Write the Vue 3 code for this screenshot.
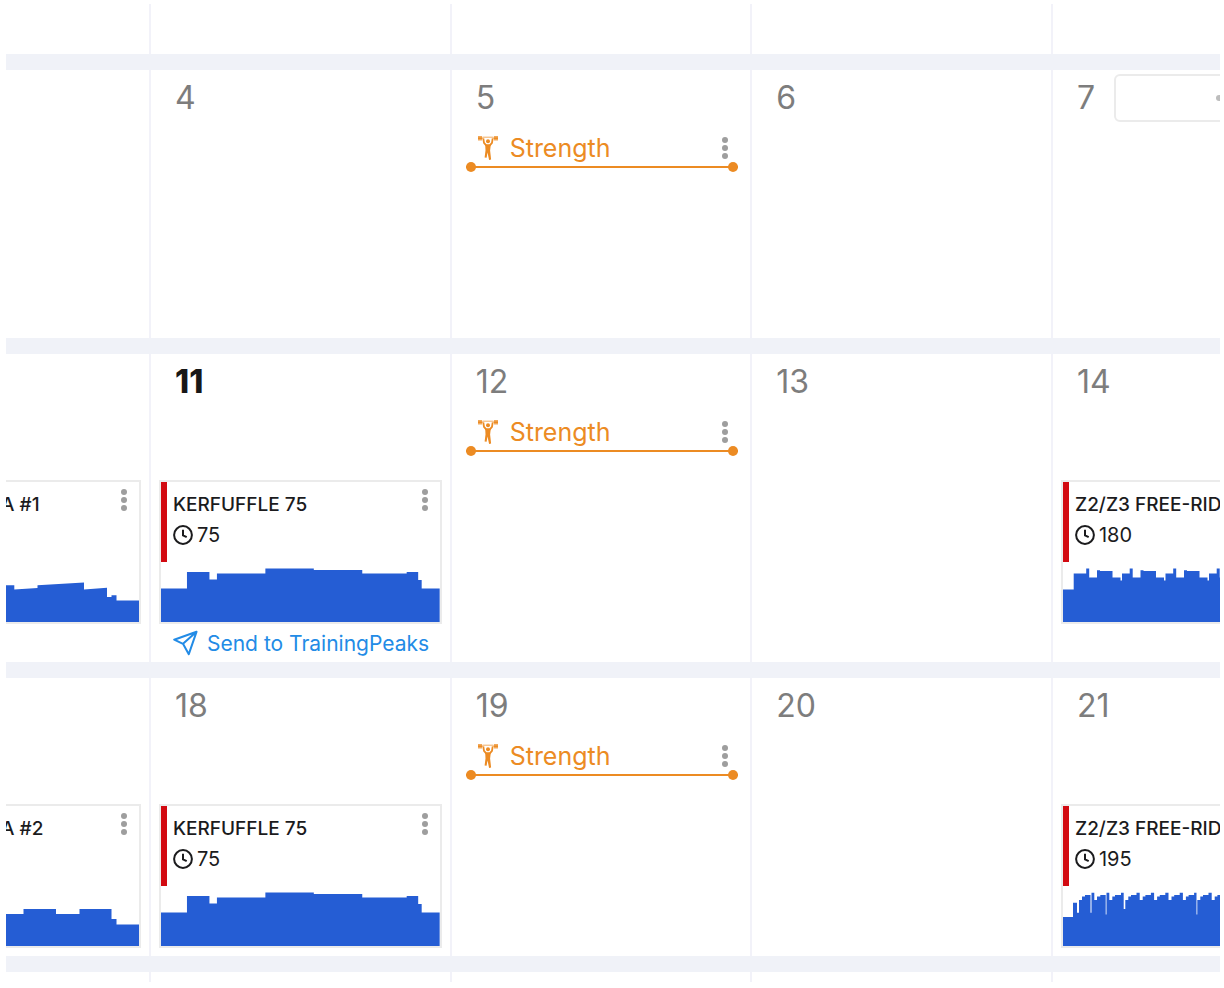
<script setup>
const steps = (list, width) => {
  let d = 'M0 56'
  list.forEach(([x, y], i) => {
    const end = i + 1 < list.length ? list[i + 1][0] : width
    d += `L${x} ${y}L${end} ${y}`
  })
  return d + `L${width} 56Z`
}

const kerfuffle = steps([[0, 22.5], [26, 6], [48.5, 13.5], [56, 7.5], [104.5, 2.5], [153, 4], [201.5, 7.5], [246, 6], [257.5, 14], [261, 22.5]], 279)

const ramps = 'M0 56V19.3H8.3V23.5L31.5 22V19.3L78 16.5V23.5L101 21.8V31H105.5V29.3H110.5V34.5H133V56Z'
const blocks = steps([[0, 24], [17.5, 19], [50, 24], [73.5, 19], [105.5, 29], [110.5, 34.5]], 133)

const waves = [[0, 23.5]]
for (let i = 0; i < 4; i++) {
  const x = i ? 15.5 + i * 43.5 : 10.7
  const b = 15.5 + i * 43.5
  waves.push([x, 7.5], [b + 7.7, 2.5], [b + 10.7, 11.5], [b + 18.5, 4.3], [b + 21.5, 5], [b + 34, 11.5], [b + 42, 14.5])
}
const freeRide = steps(waves, 190)

const climbs = [[0, 27], [10, 12.7], [14, 22.7], [16, 10], [19, 6.5], [22, 5], [27.5, 22.7], [28.5, 2.7], [31.3, 10], [34, 6.5], [37.3, 5], [42.7, 24.5], [43.5, 2.7], [46.3, 10], [49.3, 6.5], [52, 5], [58, 2.7], [60.7, 19]]
for (let i = 0; i < 8; i++) {
  const b = 62.3 + i * 14.4
  climbs.push([b, 10], [b + 3, 6.5], [b + 5.7, 5], [b + 11.2, 2.7])
  if (i === 4) climbs.push([b + 13.6, 24.5])
}
const longRide = steps(climbs, 178)

const weeks = [
  { key: 'w0', size: 'first', days: [{}, {}, {}, {}, {}] },
  { key: 'w1', days: [{}, { n: 4 }, { n: 5, strength: true }, { n: 6 }, { n: 7, more: true }] },
  {
    key: 'w2',
    days: [
      { card: { title: 'A #1', cut: 'left', path: ramps, width: 133 } },
      { n: 11, today: true, card: { title: 'KERFUFFLE 75', time: 75, path: kerfuffle, width: 279 }, send: true },
      { n: 12, strength: true },
      { n: 13 },
      { n: 14, card: { title: 'Z2/Z3 FREE-RID', time: 180, cut: 'right', path: freeRide, width: 157 } }
    ]
  },
  {
    key: 'w3',
    days: [
      { card: { title: 'A #2', cut: 'left', path: blocks, width: 133 } },
      { n: 18, card: { title: 'KERFUFFLE 75', time: 75, path: kerfuffle, width: 279 } },
      { n: 19, strength: true },
      { n: 20 },
      { n: 21, card: { title: 'Z2/Z3 FREE-RID', time: 195, cut: 'right', path: longRide, width: 157 } }
    ]
  },
  { key: 'w4', size: 'last', days: [{}, {}, {}, {}, {}] }
]
</script>

<template>
  <main class="calendar">
    <section v-for="week in weeks" :key="week.key" class="week" :class="week.size">
      <div v-for="(day, i) in week.days" :key="i" class="day">
        <header v-if="!week.size" class="head">
          <time v-if="day.n" class="num" :class="{ today: day.today }">{{ day.n }}</time>
          <button v-if="day.more" class="more" type="button" aria-label="Day options"><i></i><i></i><i></i></button>
        </header>

        <article v-if="day.strength" class="activity">
          <svg class="lifter" viewBox="0 0 22 24" aria-hidden="true">
            <path d="M1 0h4v4.6H1zM17 0h4v4.6h-4z" fill="currentColor" opacity=".75" />
            <path d="M1 2.2h4.5M16.5 2.2H21" stroke="currentColor" stroke-width="1.4" />
            <path d="M5.5 1.2h11" stroke="currentColor" stroke-width="1" opacity=".7" />
            <path d="M6.3 2.4L7 6.8L9.2 9.4H12.8L15 6.8L15.7 2.4" fill="none" stroke="currentColor" stroke-width="1.8" stroke-linejoin="round" />
            <circle cx="11" cy="5.2" r="2" fill="currentColor" />
            <path d="M8.2 8.4h5.6l-.7 6 1 9.2-2 .4-1.6-7.6-.9 5.4-2-.3.9-7.1z" fill="currentColor" />
          </svg>
          <span class="label">Strength</span>
          <button class="dots" type="button" aria-label="Strength options"><i></i><i></i><i></i></button>
        </article>

        <article v-if="day.card" class="card" :class="day.card.cut">
          <div class="info">
            <h3 class="title">{{ day.card.title }}</h3>
            <p v-if="day.card.time" class="time">
              <svg viewBox="0 0 20 20" aria-hidden="true">
                <circle cx="10" cy="10" r="8.9" />
                <path d="M10 4.7V10.3L13.7 12.2" />
              </svg>
              <span>{{ day.card.time }}</span>
            </p>
            <button v-if="day.card.cut !== 'right'" class="dots" type="button" aria-label="Workout options"><i></i><i></i><i></i></button>
          </div>
          <svg class="chart" :viewBox="`0 0 ${day.card.width} 56`" preserveAspectRatio="none" aria-hidden="true">
            <path :d="day.card.path" />
          </svg>
        </article>

        <a v-if="day.send" class="send" href="#">
          <svg viewBox="0 0 26 26" aria-hidden="true">
            <path d="M23.5 1.8L1.2 9.7L10 13.8L15.8 24.2ZM23.5 1.8L10 13.8" />
          </svg>
          <span>Send to TrainingPeaks</span>
        </a>
      </div>
    </section>
  </main>
</template>

<style>
body {
  background: #fff;
}
</style>

<style scoped>
.calendar {
  margin: 4px 4px 6px 6px;
  overflow: hidden;
  font-family: Inter, "Liberation Sans", sans-serif;
  color: #1b1b1d;
}
.week {
  display: grid;
  grid-template-columns: 145px repeat(3, minmax(0, 1fr)) 167px;
  min-height: 268px;
}
.week + .week {
  border-top: 16px solid #f0f2f8;
}
.week.first {
  min-height: 50px;
}
.week.last {
  min-height: 10px;
}
.day {
  min-width: 0;
  overflow: hidden;
  border-right: 2px solid #f2f2f9;
}
.day:last-child {
  border-right: 0;
}
.head {
  display: flex;
  align-items: flex-start;
  height: 56px;
  padding-left: 24px;
}
.num {
  flex: 0 0 37px;
  font-size: 32px;
  line-height: 56px;
  color: #7d7d7d;
}
.num.today {
  font-weight: 800;
  color: #171717;
}
button {
  margin: 0;
  padding: 0;
  border: 0;
  background: none;
  cursor: pointer;
}
.more {
  flex: none;
  display: flex;
  align-items: center;
  justify-content: center;
  gap: 4px;
  width: 230px;
  height: 48px;
  margin-top: 4px;
  border: 2px solid #ebebeb;
  border-radius: 6px;
}
.more i {
  width: 6px;
  height: 6px;
  border-radius: 50%;
  background: #bdbdbd;
}
.dots {
  display: flex;
  flex-direction: column;
  align-items: center;
  justify-content: center;
  gap: 2px;
  width: 16px;
  height: 28px;
}
.dots i {
  width: 6px;
  height: 6px;
  border-radius: 50%;
  background: #9e9e9e;
}
.activity {
  position: relative;
  display: flex;
  align-items: center;
  box-sizing: border-box;
  height: 42px;
  margin: 0 12px 0 14px;
  padding: 4px 5px 0 11px;
  border-bottom: 2px solid #ec8b23;
  color: #ec8b23;
}
.activity::before,
.activity::after {
  content: "";
  position: absolute;
  bottom: -6px;
  width: 10px;
  height: 10px;
  border-radius: 50%;
  background: #ec8b23;
}
.activity::before {
  left: 0;
}
.activity::after {
  right: 0;
}
.lifter {
  width: 22px;
  height: 24px;
}
.label {
  flex: 1;
  margin-left: 11px;
  font-size: 25px;
  line-height: 36px;
}
.card {
  margin: 70px 8px 8px;
  border: 2px solid #ebebeb;
}
.card.left {
  margin-left: 0;
  border-left: 0;
}
.card.right {
  margin-right: 0;
  border-right: 0;
}
.info {
  position: relative;
  box-sizing: border-box;
  height: 80px;
  padding: 8px 0 0 6px;
  border-left: 6px solid #d20a11;
  overflow: hidden;
}
.left .info {
  padding-left: 0;
  border-left: 0;
}
.title {
  margin: 0;
  font-size: 19px;
  font-weight: 500;
  line-height: 30px;
  white-space: nowrap;
}
.left .title {
  margin-left: -5px;
}
.time {
  display: flex;
  align-items: center;
  gap: 4px;
  margin: 0;
  font-size: 20px;
  line-height: 30px;
}
.time svg {
  width: 20px;
  height: 20px;
  fill: none;
  stroke: #1b1b1d;
  stroke-width: 2;
}
.info .dots {
  position: absolute;
  top: 4px;
  right: 7px;
}
.chart {
  display: block;
  width: 100%;
  height: 56px;
  margin-top: 4px;
}
.chart path {
  fill: #255dd4;
}
.send {
  display: flex;
  align-items: center;
  gap: 8px;
  height: 38px;
  margin: -8px 0 0 22px;
  color: #228be6;
  font-size: 21px;
  text-decoration: none;
  white-space: nowrap;
}
.send svg {
  flex: none;
  width: 26px;
  height: 26px;
  fill: none;
  stroke: #228be6;
  stroke-width: 2;
  stroke-linejoin: round;
}
</style>
